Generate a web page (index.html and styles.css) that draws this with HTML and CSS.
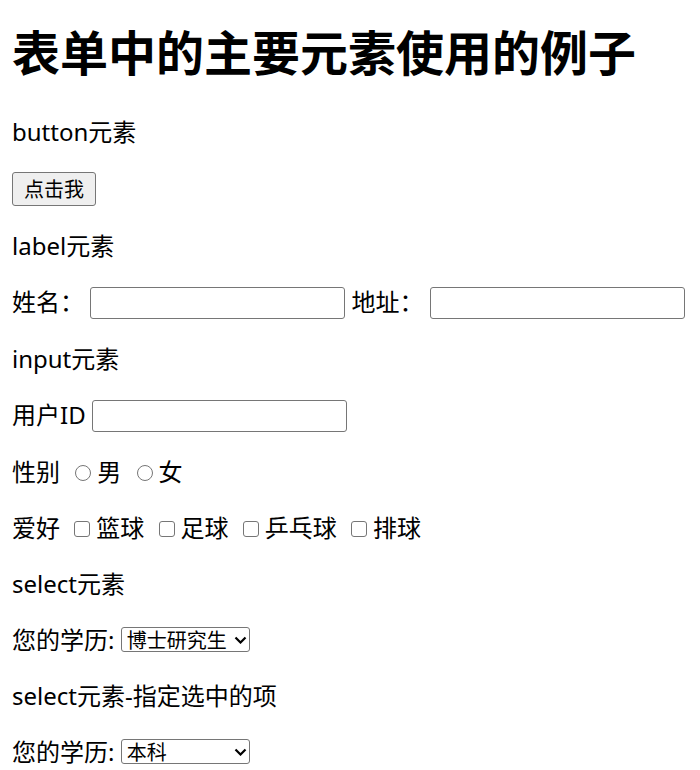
FILE: index.html
```html
<!DOCTYPE html>
<html lang="zh-CN">
<head>
    <meta charset="UTF-8">
    <meta name="viewport" content="width=device-width, initial-scale=1.0">
    <title>表单中的主要元素使用的例子</title>
    <link rel="stylesheet" href="styles.css">
</head>
<body>

    <h1>表单中的主要元素使用的例子</h1>

    <!-- button -->
    <p>button元素</p>
    <button type="button" class="btn">点击我</button>

    <!-- label -->
    <p>label元素</p>
    <p class="field-row">
        <label for="name">姓名：</label>
        <input type="text" id="name" class="text-input">
        <label for="address">地址：</label>
        <input type="text" id="address" class="text-input">
    </p>

    <!-- input -->
    <p>input元素</p>
    <form>
        <p class="field-row">
            用户ID
            <input type="text" name="userid" class="text-input">
        </p>
        <p>
            性别
            <input type="radio" name="sex" value="male" class="radio">男
            <input type="radio" name="sex" value="female" class="radio">女
        </p>
        <p>
            爱好
            <input type="checkbox" name="hobby" value="basketball" class="check">篮球
            <input type="checkbox" name="hobby" value="football" class="check">足球
            <input type="checkbox" name="hobby" value="pingpong" class="check">乒乓球
            <input type="checkbox" name="hobby" value="volleyball" class="check">排球
        </p>
    </form>

    <!-- select -->
    <p>select元素</p>
    <p>
        您的学历:
        <span class="select-wrap">
            <select name="edu" class="edu-select">
                <option value="1">博士研究生</option>
                <option value="2">硕士研究生</option>
                <option value="3">本科</option>
                <option value="4">专科</option>
            </select>
            <svg class="chevron" width="13" height="8" viewBox="0 0 13 8"><path d="M1.5 1.5 L6.5 6.5 L11.5 1.5" fill="none" stroke="#000" stroke-width="2.2"/></svg>
        </span>
    </p>

    <p>select元素-指定选中的项</p>
    <p>
        您的学历:
        <span class="select-wrap">
            <select name="edu2" class="edu-select">
                <option value="1">博士研究生</option>
                <option value="2">硕士研究生</option>
                <option value="3" selected>本科</option>
                <option value="4">专科</option>
            </select>
            <svg class="chevron" width="13" height="8" viewBox="0 0 13 8"><path d="M1.5 1.5 L6.5 6.5 L11.5 1.5" fill="none" stroke="#000" stroke-width="2.2"/></svg>
        </span>
    </p>

</body>
</html>
```

FILE: styles.css
```css
body {
    font-family: "Noto Sans", "Noto Sans CJK SC", sans-serif;
    font-size: 24px;
    line-height: 32px;
    color: #000;
    margin: 0;
    padding: 0 12px 12px;
}

h1 {
    font-size: 48px;
    line-height: 63px;
    font-weight: bold;
    margin: 21px 0 32px;
}

p {
    margin: 24px 0;
}

form {
    margin: 0;
}

.btn {
    box-sizing: border-box;
    font-family: "Noto Sans CJK SC", sans-serif;
    font-size: 20px;
    line-height: 28px;
    height: 34px;
    padding: 0 11px;
    margin: 0;
    background-color: #efefef;
    border: 1px solid #767676;
    border-radius: 3px;
    color: #000;
}

.text-input {
    box-sizing: border-box;
    width: 255px;
    height: 32px;
    margin: 1px 0 0;
    padding: 1px 3px;
    border: 1px solid #767676;
    border-radius: 3px;
    font-size: 20px;
    vertical-align: top;
}

.radio,
.check {
    appearance: none;
    -webkit-appearance: none;
    box-sizing: border-box;
    width: 16px;
    height: 16px;
    margin: 0 6px 0 9px;
    border: 1px solid #767676;
    background-color: #fff;
    vertical-align: baseline;
}

.radio {
    border-radius: 50%;
}

.check {
    border-radius: 3px;
    margin: 0 6px 0 8px;
}

.select-wrap {
    position: relative;
    display: inline-block;
    vertical-align: top;
    margin-top: 3px;
}

.edu-select {
    display: block;
    box-sizing: border-box;
    width: 129px;
    height: 25px;
    margin: 0;
    padding: 0 20px 0 5px;
    font-family: "Noto Sans CJK SC", sans-serif;
    font-size: 20px;
    line-height: 23px;
    border: 1px solid #767676;
    border-radius: 3px;
    background-color: #fff;
    color: #000;
    appearance: none;
    -webkit-appearance: none;
}

.chevron {
    position: absolute;
    right: 3px;
    top: 9px;
    pointer-events: none;
}
```
